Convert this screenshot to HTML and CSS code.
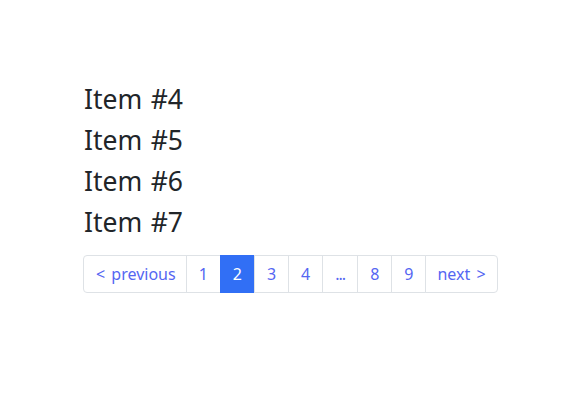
FILE: index.html
```html
<!DOCTYPE html>
<html>
<head>
<meta charset="utf-8">
<link rel="stylesheet" href="styles.css">
</head>
<body>
<div class="page">
  <div class="list">
    <div class="item">Item #4</div>
    <div class="item">Item #5</div>
    <div class="item">Item #6</div>
    <div class="item">Item #7</div>
  </div>
  <ul class="pagination">
    <li class="page-item"><a class="page-link prev">&lt; previous</a></li>
    <li class="page-item"><a class="page-link">1</a></li>
    <li class="page-item active"><a class="page-link">2</a></li>
    <li class="page-item"><a class="page-link">3</a></li>
    <li class="page-item"><a class="page-link">4</a></li>
    <li class="page-item"><a class="page-link dots">...</a></li>
    <li class="page-item"><a class="page-link">8</a></li>
    <li class="page-item"><a class="page-link">9</a></li>
    <li class="page-item"><a class="page-link next">next &gt;</a></li>
  </ul>
</div>
</body>
</html>
```
FILE: styles.css
```css
html, body {
  margin: 0;
  padding: 0;
  background: #fff;
}
body {
  font-family: "Noto Sans", "Open Sans", sans-serif;
  color: #212529;
}
.page {
  padding: 79px 0 0 84px;
}
.list {
  display: flex;
  flex-direction: column;
}
.item {
  font-size: 26.5px;
  line-height: 41px;
  word-spacing: 1.5px;
}
.pagination {
  display: inline-flex;
  list-style: none;
  margin: 12px 0 0 -1px;
  padding: 0;
}
.page-link {
  display: block;
  padding: 6px 12px;
  font-size: 16px;
  line-height: 24px;
  color: #5566f2;
  border: 1px solid #dee2e6;
  margin-left: -1px;
  background: #fff;
}
.page-link.dots {
  letter-spacing: -1px;
  padding-right: 12px;
}
.page-link.prev {
  word-spacing: 2px;
  padding-right: 10px;
}
.page-link.next {
  word-spacing: 2px;
  padding-left: 11px;
  padding-right: 11px;
}
.page-item:first-child .page-link {
  margin-left: 0;
  border-radius: 4px 0 0 4px;
}
.page-item:last-child .page-link {
  border-radius: 0 4px 4px 0;
}
.page-item.active .page-link {
  background: #316ff5;
  border-color: #316ff5;
  color: #fff;
}
```
